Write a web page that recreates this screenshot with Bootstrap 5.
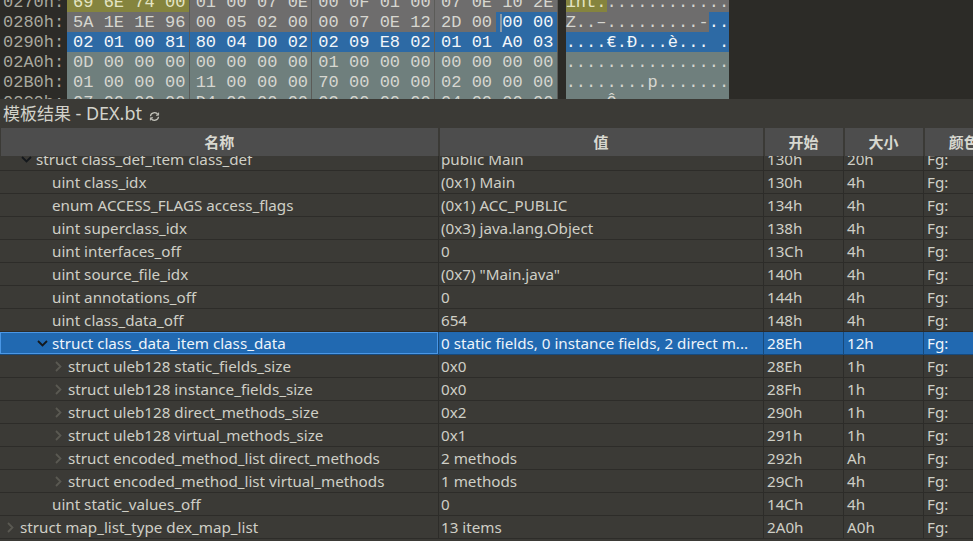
<!DOCTYPE html>
<html lang="zh">
<head>
<meta charset="utf-8">
<title>DEX.bt</title>
<link href="https://cdn.jsdelivr.net/npm/bootstrap@5.3.0/dist/css/bootstrap.min.css" rel="stylesheet">
<style>
html,body{height:100%;margin:0;background:#3b3a36;overflow:hidden}
.app{width:973px;height:541px;font-family:"Noto Sans","Noto Sans CJK SC",sans-serif;overflow:hidden}
.hexpane{height:99px;background:#2c2b27;overflow:hidden;font-family:"Liberation Mono",monospace;font-size:17px;line-height:22px;color:#d6d6d0}
.hexrows{margin-top:-8px}
.hrow{height:20px;white-space:pre}
.gut{width:67px;padding-left:3px;color:#a8a89f;flex:none}
.grp{width:122.67px;display:flex;flex:none;border-right:1px solid #5b5b58}
.grp:last-of-type{border-right:0}
.by{width:30.67px;padding-left:6px;flex:none}
.grp .by:last-child{width:29.67px}
.gap{width:8px;flex:none}
.asc{width:163.5px;display:flex;flex:none}
.ch{width:10.22px;flex:none;text-align:center}
.g-y{background:#85843e;color:#e4e4c4}
.g-n{background:#6e6d6d}
.g-s{background:#2d6aa5;color:#f2f6fa}
.g-t{background:#6f7f7d}
.caret-mark{position:relative}
.caret-mark::before{content:"";position:absolute;left:4px;top:2px;bottom:0;width:2px;background:#8d9aa6}
.titlebar{height:29px;background:#3b3a36;color:#d3d3cb;font-size:17px;line-height:29px;padding-left:3px;white-space:nowrap}
.titlebar .latin{font-size:18px}
.titlebar svg{margin-left:7px;vertical-align:-1px}
.tree{table-layout:fixed;width:1004px;margin:0;border-collapse:separate;border-spacing:0;--bs-table-bg:transparent;--bs-table-color:#cfcfc6;color:#cfcfc6}
.headwrap{height:28px;overflow:hidden;padding-left:1px;background:#3b3a36}
.tree th{height:28px;padding:0;background:#4d4d4d;color:#d8d8d0;text-align:center;font-size:15px;font-weight:700;border:0;border-right:2px solid #3b3a36;vertical-align:middle;line-height:28px}
.bodywrap{height:385px;overflow:hidden}
.tree.bodyt{margin-top:-8px}
.tree td{height:23px;padding:0 0 0 3px;background:#3b3a36;font-size:15.2px;line-height:22px;border:0;border-right:1px solid #2d2c29;border-bottom:1px solid #2d2c29;white-space:nowrap;overflow:hidden;color:#cfcfc6;vertical-align:middle}
.tree td.namecell{padding-left:0}
.tree td.valcell{padding-left:2px}
.nm{display:flex;align-items:center;height:22px}
.nm .tw{width:16px;flex:none;display:flex;justify-content:center;align-items:center;padding-right:3px}
.d0{padding-left:4px}.d1{padding-left:20px}.d2{padding-left:36px}.d3{padding-left:52px}
.tree tr.picked td{background:#2169b1;color:#eef4fa;border-right-color:#17497b;border-bottom-color:#17497b;border-top:0}
.tree tr.picked td.namecell{box-shadow:inset 0 0 0 1px #4a97e6}
</style>
</head>
<body>
<div class="app d-flex flex-column">
  <div class="hexpane">
    <div class="hexrows" id="hex"></div>
  </div>
  <div class="titlebar">模板结果 <span class="latin">- DEX.bt</span><svg width="11" height="9" viewBox="0 0 11 9" fill="none" stroke="#c4c4bc" stroke-width="1.2"><path d="M1.5 4.2A4 3.6 0 0 1 9 2.6"/><path d="M9.5 4.8A4 3.6 0 0 1 2 6.4"/><path d="M9.6.6V3.2H7" stroke-width="1"/><path d="M1.4 8.4V5.8H4" stroke-width="1"/></svg></div>
  <div class="headwrap">
    <table class="table tree">
      <colgroup><col style="width:438.5px"><col style="width:325px"><col style="width:80px"><col style="width:80px"><col style="width:80.5px"></colgroup>
      <thead><tr><th>名称</th><th>值</th><th>开始</th><th>大小</th><th>颜色</th></tr></thead>
    </table>
  </div>
  <div class="bodywrap">
    <table class="table tree bodyt">
      <colgroup><col style="width:439px"><col style="width:325px"><col style="width:80px"><col style="width:80px"><col style="width:80px"></colgroup>
      <tbody id="rows"></tbody>
    </table>
  </div>
</div>
<script>
var hexData=[
 ["0270h:","69 6E 74 00 01 00 07 0E 00 0F 01 00 07 0E 10 2E","int............."],
 ["0280h:","5A 1E 1E 96 00 05 02 00 00 07 0E 12 2D 00 00 00","Z..–.........-.."],
 ["0290h:","02 01 00 81 80 04 D0 02 02 09 E8 02 01 01 A0 03","....€.Ð...è... ."],
 ["02A0h:","0D 00 00 00 00 00 00 00 01 00 00 00 00 00 00 00","................"],
 ["02B0h:","01 00 00 00 11 00 00 00 70 00 00 00 02 00 00 00","........p......."],
 ["02C0h:","07 00 00 00 D4 00 00 00 03 00 00 00 04 00 00 00","....Ô..........."]
];
function cls(r,i){
  if(r===0) return i<4?"g-y":"g-n";
  if(r===1) return i>=14?"g-s":"g-n";
  if(r===2) return "g-s";
  return "g-t";
}
var h="";
hexData.forEach(function(row,r){
  var b=row[1].split(" "),s='<div class="hrow d-flex"><span class="gut">'+row[0]+'</span>';
  for(var g=0;g<4;g++){
    s+='<span class="grp">';
    for(var i=g*4;i<g*4+4;i++){
      var c=cls(r,i);
      if(r===1&&i===14) c+=" caret-mark";
      s+='<span class="by '+c+'">'+b[i]+'</span>';
    }
    s+='</span>';
  }
  s+='<span class="gap"></span><span class="asc">';
  var a=Array.from(row[2]);
  a.forEach(function(ch,i){s+='<span class="ch '+cls(r,i)+'">'+(ch===" "?"&nbsp;":ch)+'</span>';});
  s+='</span></div>';
  h+=s;
});
document.getElementById("hex").innerHTML=h;

var down='<svg width="11" height="7" viewBox="0 0 11 7" fill="none" stroke="#14181c" stroke-width="1.8"><path d="M1 1l4.5 4.5L10 1"/></svg>';
var right='<svg width="7" height="11" viewBox="0 0 7 11" fill="none" stroke="#5a5952" stroke-width="1.8"><path d="M1 1l4.5 4.5L1 10"/></svg>';
var data=[
 [1,"d","struct class_def_item class_def","public Main","130h","20h"],
 [2,"","uint class_idx","(0x1) Main","130h","4h"],
 [2,"","enum ACCESS_FLAGS access_flags","(0x1) ACC_PUBLIC","134h","4h"],
 [2,"","uint superclass_idx","(0x3) java.lang.Object","138h","4h"],
 [2,"","uint interfaces_off","0","13Ch","4h"],
 [2,"","uint source_file_idx","(0x7) \"Main.java\"","140h","4h"],
 [2,"","uint annotations_off","0","144h","4h"],
 [2,"","uint class_data_off","654","148h","4h"],
 [2,"d","struct class_data_item class_data","0 static fields, 0 instance fields, 2 direct m...","28Eh","12h",1],
 [3,"r","struct uleb128 static_fields_size","0x0","28Eh","1h"],
 [3,"r","struct uleb128 instance_fields_size","0x0","28Fh","1h"],
 [3,"r","struct uleb128 direct_methods_size","0x2","290h","1h"],
 [3,"r","struct uleb128 virtual_methods_size","0x1","291h","1h"],
 [3,"r","struct encoded_method_list direct_methods","2 methods","292h","Ah"],
 [3,"r","struct encoded_method_list virtual_methods","1 methods","29Ch","4h"],
 [2,"","uint static_values_off","0","14Ch","4h"],
 [0,"r","struct map_list_type dex_map_list","13 items","2A0h","A0h"]
];
var t="";
data.forEach(function(d){
  var ic=d[1]==="d"?down:d[1]==="r"?right:"";
  t+='<tr'+(d[6]?' class="picked"':'')+'><td class="namecell"><div class="nm d'+d[0]+'"><span class="tw">'+ic+'</span><span>'+d[2]+'</span></div></td><td class="valcell">'+d[3].replace(/"/g,"&quot;")+'</td><td>'+d[4]+'</td><td>'+d[5]+'</td><td>Fg:</td></tr>';
});
document.getElementById("rows").innerHTML=t;
</script>
<script src="https://cdn.jsdelivr.net/npm/bootstrap@5.3.0/dist/js/bootstrap.bundle.min.js"></script>
</body>
</html>
